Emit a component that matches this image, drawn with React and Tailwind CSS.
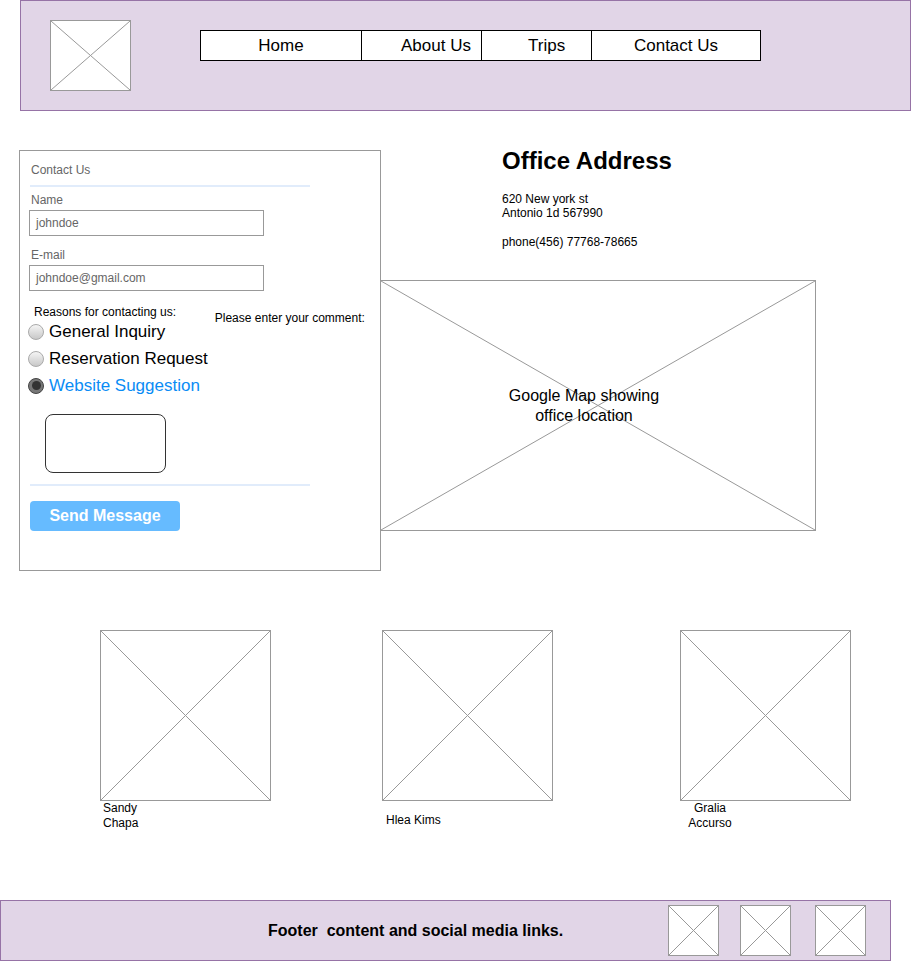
const font = { fontFamily: '"Liberation Sans", Arial, sans-serif' };

function XBox({ className = '', children }) {
  return (
    <div className={`relative bg-white border border-[#999] ${className}`}>
      <svg className="absolute inset-0 w-full h-full" viewBox="0 0 100 100" preserveAspectRatio="none">
        <line x1="0" y1="0" x2="100" y2="100" stroke="#999" strokeWidth="1" vectorEffect="non-scaling-stroke" />
        <line x1="100" y1="0" x2="0" y2="100" stroke="#999" strokeWidth="1" vectorEffect="non-scaling-stroke" />
      </svg>
      {children}
    </div>
  );
}

function Radio({ checked, label }) {
  return (
    <div className="flex items-center h-[27px]">
      {checked ? (
        <div className="w-[16px] h-[16px] rounded-full border border-[#444] bg-[#777] flex items-center justify-center">
          <div className="w-[9px] h-[9px] rounded-full bg-[#333]"></div>
        </div>
      ) : (
        <div className="w-[16px] h-[16px] rounded-full border border-[#aaa] bg-gradient-to-b from-[#f5f5f5] to-[#c8c8c8]"></div>
      )}
      <span className={`ml-[5px] text-[17px] leading-[20px] ${checked ? 'text-[#0a8cf5]' : 'text-black'}`}>{label}</span>
    </div>
  );
}

export default function App() {
  const navItems = [
    { label: 'Home', cls: 'w-[160px] justify-center' },
    { label: 'About Us', cls: 'w-[120px] border-l border-black pl-[39px]' },
    { label: 'Trips', cls: 'w-[110px] border-l border-black pl-[46px]' },
    { label: 'Contact Us', cls: 'w-[169px] border-l border-black justify-center' },
  ];

  const people = [
    { name: 'Sandy\nChapa', ml: 'ml-[100px]', cap: 'pl-[3px] pt-0', },
    { name: 'Hlea Kims', ml: 'ml-[111px]', cap: 'pl-[4px] pt-[12px]' },
    { name: 'Gralia\nAccurso', ml: 'ml-[127px]', cap: 'pl-[5px] pt-0 w-[55px] text-center' },
  ];

  return (
    <div className="w-[911px] h-[961px] bg-white text-black overflow-hidden" style={font}>
      {/* header */}
      <div className="ml-[20px] w-[891px] h-[111px] border border-[#9673a6] bg-[#e1d5e7] flex items-start">
        <XBox className="ml-[29px] mt-[19px] w-[81px] h-[71px]" />
        <div className="ml-[69px] mt-[29px] flex h-[31px] border border-black bg-white">
          {navItems.map(n => (
            <div key={n.label} className={`flex items-center text-[17px] ${n.cls}`}>{n.label}</div>
          ))}
        </div>
      </div>

      {/* contact + address */}
      <div className="flex items-start mt-[39px]">
        <div className="ml-[19px] w-[362px] h-[421px] border border-[#999] shrink-0">
          <div className="pl-[11px] mt-[12px] text-[12px] leading-[14px] text-[#666]">Contact Us</div>
          <div className="ml-[10px] mt-[8px] w-[280px] h-[2px] bg-[#e1ecfb]"></div>
          <div className="pl-[11px] mt-[6px] text-[12px] leading-[14px] text-[#666]">Name</div>
          <div className="ml-[9px] mt-[3px] w-[235px] h-[26px] border border-[#999] flex items-center pl-[6px] text-[12px] text-[#666]">johndoe</div>
          <div className="pl-[11px] mt-[12px] text-[12px] leading-[14px] text-[#666]">E-mail</div>
          <div className="ml-[9px] mt-[3px] w-[235px] h-[26px] border border-[#999] flex items-center pl-[6px] text-[12px] text-[#666]">johndoe@gmail.com</div>
          <div className="flex items-start mt-[15px]">
            <div className="ml-[8px]">
              <div className="pl-[6px] pt-[1px] text-[12px] leading-[11px]">Reasons for contacting us:</div>
              <Radio label="General Inquiry" />
              <Radio label="Reservation Request" />
              <Radio checked label="Website Suggestion" />
            </div>
            <div className="ml-[7px] mt-[5px] text-[12px] leading-[14px]">Please enter your comment:</div>
          </div>
          <div className="ml-[25px] mt-[15px] w-[121px] h-[59px] rounded-[8px] border border-[#333]"></div>
          <div className="ml-[10px] mt-[11px] w-[280px] h-[2px] bg-[#e1ecfb]"></div>
          <button className="ml-[10px] mt-[15px] w-[150px] h-[30px] rounded-[4px] bg-[#66bbff] text-white font-bold text-[16px]">Send Message</button>
        </div>

        <div className="flex flex-col">
          <div className="pl-[121px] -mt-[3px] text-[24px] leading-[28px] font-bold">Office Address</div>
          <div className="pl-[121px] mt-[17px] text-[12px] leading-[14px]">
            <div>620 New york st</div>
            <div>Antonio 1d 567990</div>
            <div className="mt-[15px]">phone(456) 77768-78665</div>
          </div>
          <XBox className="-ml-[1px] mt-[31px] w-[436px] h-[251px] flex items-center justify-center">
            <div className="relative text-center text-[16px] leading-[20px] pr-[28px]">
              Google Map showing<br />office location
            </div>
          </XBox>
        </div>
      </div>

      {/* team */}
      <div className="flex items-start h-[270px] mt-[59px]">
        {people.map(p => (
          <div key={p.name} className={`flex flex-col ${p.ml}`}>
            <XBox className="w-[171px] h-[171px]" />
            <div className={`text-[12px] leading-[15px] whitespace-pre-line ${p.cap}`}>{p.name}</div>
          </div>
        ))}
      </div>

      {/* footer */}
      <div className="w-[891px] h-[61px] border border-[#9673a6] bg-[#e1d5e7] flex items-center">
        <div className="w-[667px] pl-[267px] font-bold text-[16px] whitespace-pre">Footer  content and social media links.</div>
        <XBox className="w-[51px] h-[51px]" />
        <XBox className="ml-[21px] w-[51px] h-[51px]" />
        <XBox className="ml-[24px] w-[51px] h-[51px]" />
      </div>
    </div>
  );
}
